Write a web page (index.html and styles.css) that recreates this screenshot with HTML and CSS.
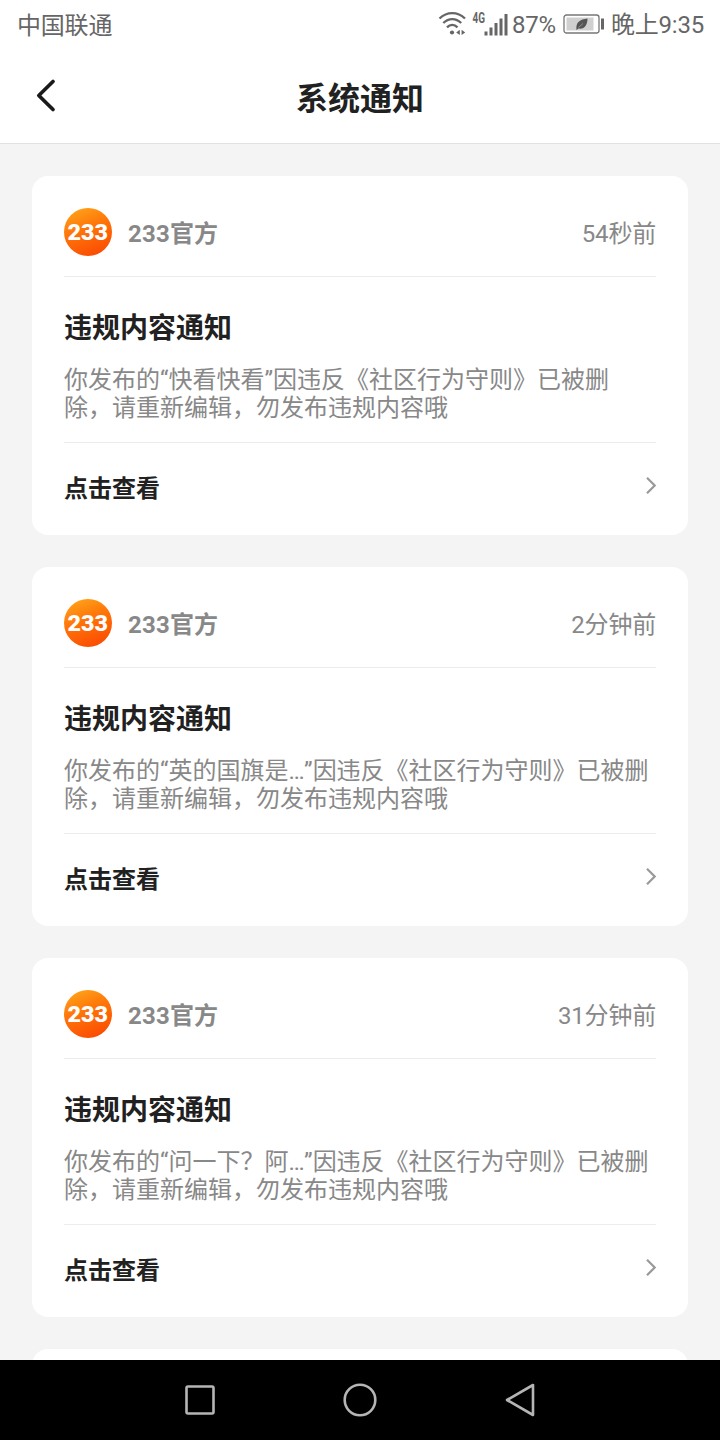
FILE: index.html
```html
<!DOCTYPE html>
<html lang="zh-CN">
<head>
<meta charset="utf-8">
<title>系统通知</title>
<link rel="stylesheet" href="styles.css">
</head>
<body>
<svg class="defs" width="0" height="0" aria-hidden="true">
  <defs>
    <linearGradient id="orange" x1="0.2" y1="0" x2="0.6" y2="1">
      <stop offset="0" stop-color="#ffa41a"/>
      <stop offset="0.45" stop-color="#ff7508"/>
      <stop offset="1" stop-color="#fb4d04"/>
    </linearGradient>
    <symbol id="avatar" viewBox="0 0 48 48">
      <circle cx="24" cy="24" r="24" fill="url(#orange)"/>
      <text class="logo-text" x="3.500" y="31.500" textLength="40.500" lengthAdjust="spacingAndGlyphs">233</text>
    </symbol>
    <symbol id="more" viewBox="0 0 12 20">
      <path d="M2 1.800 9.700 9.500 2 17.200" fill="none" stroke="#999" stroke-width="2.200"/>
    </symbol>
  </defs>
</svg>
<div class="screen">
  <header class="status">
    <span class="carrier">中国联通</span>
    <div class="indicators">
      <svg class="signals" width="72" height="28" viewBox="0 0 72 28">
        <g fill="none" stroke="#666" stroke-width="2.400">
          <path d="M1.500 9.500C9 2.300 19.500 2.300 27 9.500"/>
          <path d="M5.300 14C10.600 8.800 17.900 8.800 23.200 14"/>
          <path d="M9 18.300C12.100 15.300 16.400 15.300 19.500 18.300"/>
        </g>
        <circle cx="14" cy="23.500" r="2.100" fill="#666"/>
        <path d="M21.800 20.700v5.400l-3.600-2.700zM23.600 20.700v5.400l3.600-2.700z" fill="#666"/>
        <text class="network" x="34.500" y="14" textLength="12.500" lengthAdjust="spacingAndGlyphs">4G</text>
        <path d="M46.500 22.500h3v4h-3zM51.500 18.500h3v8h-3zM56.500 14h3v12.500h-3zM61.500 9.500h3v17h-3zM66.500 5h3v21.500h-3z" fill="#666"/>
      </svg>
      <span class="percent">87%</span>
      <svg class="battery" width="42" height="22" viewBox="0 0 42 22">
        <rect x="1" y="2" width="35" height="18" rx="2.500" fill="#fff" stroke="#777" stroke-width="1.300"/>
        <rect x="3.500" y="4.500" width="27" height="13" fill="#d0d0d0"/>
        <path d="M38 5.500h3v11h-3z" fill="#666"/>
        <path d="M13.500 17C12.500 9 17 6.500 24.500 5.500 24.500 12 21.500 16.500 15.500 15.500z" fill="#555"/>
        <path d="M15.500 14.500 20 10.500" stroke="#b5b5b5" stroke-width=".6"/>
      </svg>
      <span class="clock">晚上9:35</span>
    </div>
  </header>
  <div class="titlebar">
    <svg class="back" width="24" height="36" viewBox="0 0 24 36"><path d="M19 4 4.800 18 19 32" transform="translate(0 -.5)" fill="none" stroke="#1a1a1a" stroke-width="3.700" stroke-linecap="round" stroke-linejoin="round"/></svg>
    <h1>系统通知</h1>
  </div>
  <main class="feed">
    <article class="card">
      <div class="card-head"><svg class="avatar"><use href="#avatar"/></svg><span class="name">233官方</span><time>54秒前</time></div>
      <div class="card-body"><h2>违规内容通知</h2><p>你发布的“快看快看”因违反《社区行为守则》已被删<br>除，请重新编辑，勿发布违规内容哦</p></div>
      <div class="card-foot"><span>点击查看</span><svg class="more"><use href="#more"/></svg></div>
    </article>
    <article class="card">
      <div class="card-head"><svg class="avatar"><use href="#avatar"/></svg><span class="name">233官方</span><time>2分钟前</time></div>
      <div class="card-body"><h2>违规内容通知</h2><p>你发布的“英的国旗是<span class="dots">…</span>”因违反《社区行为守则》已被删<br>除，请重新编辑，勿发布违规内容哦</p></div>
      <div class="card-foot"><span>点击查看</span><svg class="more"><use href="#more"/></svg></div>
    </article>
    <article class="card">
      <div class="card-head"><svg class="avatar"><use href="#avatar"/></svg><span class="name">233官方</span><time>31分钟前</time></div>
      <div class="card-body"><h2>违规内容通知</h2><p>你发布的“问一下？阿<span class="dots">…</span>”因违反《社区行为守则》已被删<br>除，请重新编辑，勿发布违规内容哦</p></div>
      <div class="card-foot"><span>点击查看</span><svg class="more"><use href="#more"/></svg></div>
    </article>
    <article class="card"></article>
  </main>
  <nav class="navbar">
    <svg width="36" height="36" viewBox="0 0 36 36"><rect x="4.500" y="4.500" width="27" height="27" rx="1.500"/></svg>
    <svg width="36" height="36" viewBox="0 0 36 36"><circle cx="18" cy="18" r="15.300"/></svg>
    <svg width="36" height="36" viewBox="0 0 36 36"><path d="M5 18 31 3V33z"/></svg>
  </nav>
</div>
</body>
</html>
```
FILE: styles.css
```css
* { box-sizing: border-box; }
body { margin: 0; font-family: Roboto, "Noto Sans CJK SC", sans-serif; color: #212121; }
.defs { position: absolute; }
.screen { width: 720px; height: 1440px; display: flex; flex-direction: column; overflow: hidden; background: #f4f4f4; }
svg { display: block; flex: none; }

.status { flex: none; height: 48px; padding: 2px 16px 0 17px; display: flex; align-items: center; justify-content: space-between; background: #fff; color: #666; font-size: 24px; line-height: 46px; }
.carrier { padding-top: 2px; line-height: 44px; letter-spacing: -.2px; }
.indicators { display: flex; align-items: center; }
.signals { margin-right: 2px; margin-top: -4px; }
.percent { letter-spacing: -.2px; }
.battery { margin: -2px 6px 0 7px; }
.clock { letter-spacing: -.2px; }
.network { font: bold 14px Roboto, sans-serif; fill: #666; }

.titlebar { flex: none; height: 96px; padding: 0 34px; display: grid; grid-template-columns: 24px 1fr 24px; align-items: center; background: #fff; border-bottom: 1px solid #e2e2e2; }
h1 { margin: 7px 0 0; text-align: center; font-size: 32px; line-height: 40px; font-weight: 700; }

.feed { flex: 1; min-height: 0; overflow: hidden; padding: 32px; display: flex; flex-direction: column; gap: 32px; }
.card { flex: none; height: 359px; padding: 0 32px; border-radius: 16px; background: #fff; }
.card-head { height: 101px; padding-top: 12px; display: flex; align-items: center; border-bottom: 1px solid #ececec; font-size: 24px; line-height: 28px; color: #888; }
.card-head time { letter-spacing: -.2px; padding-top: 4px; }
.avatar { width: 48px; height: 48px; margin-right: 16px; }
.logo-text { font: 900 21.500px Roboto, sans-serif; fill: #fff; }
.name { flex: 1; font-weight: 700; letter-spacing: .2px; padding-top: 4px; }
.card-body { height: 166px; padding-top: 33px; border-bottom: 1px solid #ececec; }
h2 { margin: 0; font-size: 28px; line-height: 38px; font-weight: 700; }
p { margin: 18px 0 0; font-size: 24px; line-height: 28px; color: #888; white-space: nowrap; }
.dots { letter-spacing: -.5px; }
.card-foot { height: 85px; display: flex; align-items: center; justify-content: space-between; font-size: 24px; font-weight: 700; }
.card-foot span { padding-top: 2px; }
.more { width: 12px; height: 20px; margin-right: -1px; }

.navbar { flex: none; height: 80px; display: flex; align-items: center; justify-content: center; gap: 124px; background: #000; }
.navbar svg { fill: none; stroke: #b5b5b5; stroke-width: 2.600; stroke-linejoin: round; }
```
